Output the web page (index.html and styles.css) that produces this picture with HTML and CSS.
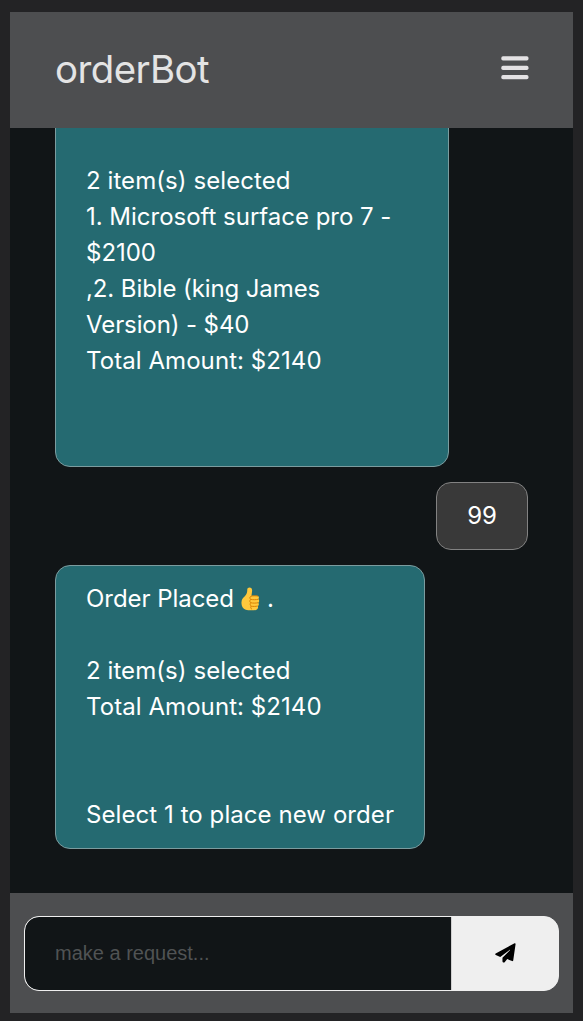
FILE: index.html
```html
<!DOCTYPE html>
<html lang="en">
<head>
<meta charset="utf-8">
<title>orderBot</title>
<link rel="stylesheet" href="styles.css">
</head>
<body>
<div class="app">
  <header class="header">
    <h1 class="brand">orderBot</h1>
    <svg class="menu" viewBox="0 0 28 24" aria-label="Menu"><rect x=".3" y=".2" width="27.2" height="4.2" rx="1.7"/><rect x=".3" y="9.7" width="27.2" height="4.2" rx="1.7"/><rect x=".3" y="19.1" width="27.2" height="4.2" rx="1.7"/></svg>
  </header>
  <main class="chat">
    <div class="bubble bot wide">
      <p class="line gap-above">2 item(s) selected</p>
      <p class="line normal">1. Microsoft surface pro 7 - $2100</p>
      <p class="line tight">,2. Bible (king James Version) - $40</p>
      <p class="line gap-below">Total Amount: $2140</p>
    </div>
    <div class="bubble user">99</div>
    <div class="bubble bot">
      <p class="line placed"><span>Order Placed</span><svg class="thumb" viewBox="0 0 20 25" aria-label="Thumbs up"><path d="M7.3.9c1.6-1.2 4.2-.5 4.4 2 .1 2.2-.4 3.9-.7 6.2h5.8c2.2 0 2.7 2.7 1.3 3.5 1.5.9 1.3 3.2 0 3.8 1.1 1 .9 3-.4 3.6.8 1.3.1 3.5-1.9 4-3.3.7-8.3.6-10.8-.3C1.9 22.5.3 19.5.5 16c.2-3.2 1.500-4.600 3.500-6.400 2.100-2 2.500-3.800 2.600-6.500 0-1 .1-1.700.7-2.200Z" fill="#ffc83d"/><path d="M18 9.500c-2.500-.5-5.800-.5-7.600.2-1.500.7-1.500 2.600-.1 3.200-1.500.8-1.300 3 .1 3.600-1.200.8-.9 2.900.4 3.400-1 .9-.6 2.700.7 3.300M10.500 12.900c2 .5 5.400.4 7.600-.1M10.500 16.500c2 .5 5.200.4 7.600-.1M10.800 20c2 .5 4.600.4 6.800-.1" fill="none" stroke="#d67d00" stroke-width="1"/></svg><span>.</span></p>
      <p class="line gap-above">2 item(s) selected</p>
      <p class="line gap-below">Total Amount: $2140</p>
      <p class="line">Select 1 to place new order</p>
    </div>
  </main>
  <footer class="footer">
    <form class="composer">
      <input class="field" type="text" placeholder="make a request...">
      <button class="send" type="button" aria-label="Send"><svg class="plane" viewBox="0 0 22 21"><path d="M20.5.3c.6-.3 1.200.1 1.100.8l-2.500 17.200c-.1.600-.7.900-1.200.7l-5.100-2.100-2.500 3.100c-.8 1-2.500.5-2.500-.9v-3.500L15.700 7.600c.2-.3-.1-.6-.4-.3L5.500 14.600.8 12.600c-.7-.3-.8-1.200-.1-1.600Z"/></svg></button>
    </form>
  </footer>
</div>
</body>
</html>
```
FILE: styles.css
```css
* {
  box-sizing: border-box;
}

body {
  margin: 0;
  height: 1021px;
  padding: 12px 10px 8px;
  overflow: hidden;
  background: #232325;
  font-family: Inter, sans-serif;
}

.app {
  display: flex;
  flex-direction: column;
  height: 1001px;
  background: #111517;
}

.header {
  display: flex;
  flex: 0 0 116px;
  align-items: center;
  justify-content: space-between;
  padding: 0 44px 0 45px;
  background: #4d4e50;
}

.brand {
  margin: 0 0 2px;
  color: #e4e4e4;
  font: 400 38.4px/48px Inter, sans-serif;
  letter-spacing: -0.55px;
}

.menu {
  width: 28px;
  height: 24px;
  margin-bottom: 4px;
  fill: #e4e2e4;
}

.chat {
  display: flex;
  flex: 1;
  min-height: 0;
  flex-direction: column;
  align-items: flex-start;
  justify-content: flex-end;
  gap: 15px;
  overflow: hidden;
  padding: 0 45px 44px;
}

.bubble {
  flex: none;
  padding: 15px 30px;
  border: 1px solid #7c9c9f;
  border-radius: 15px;
  background: #256a71;
  color: #fff;
  font-size: 24px;
  line-height: 36px;
}

.bot {
  letter-spacing: 0.07px;
}

.wide {
  width: 394px;
}

.line {
  margin: 0;
}

.normal {
  letter-spacing: -0.02px;
}

.tight {
  letter-spacing: -0.1px;
}

.gap-above {
  padding-top: 36px;
}

.gap-below {
  padding-bottom: 72px;
}

.user {
  align-self: flex-end;
  border-color: #828282;
  background: #393939;
}

.placed {
  display: flex;
  align-items: center;
  letter-spacing: -0.05px;
}

.thumb {
  width: 19px;
  height: 24px;
  margin: 0 7px 0 7px;
}

.footer {
  flex: 0 0 120px;
  padding: 23px 14px 22px;
  background: #4d4e50;
}

.composer {
  display: flex;
  height: 75px;
  overflow: hidden;
  border: 1px solid #efefef;
  border-radius: 15px;
  background: #efefef;
}

.field {
  flex: 1;
  min-width: 0;
  padding: 0 30px;
  border: 0;
  border-radius: 14px 0 0 14px;
  outline: 0;
  background: #111517;
  color: #fff;
  font: 20px "Liberation Sans", Arial, sans-serif;
}

.field::placeholder {
  color: #505354;
}

.send {
  display: flex;
  width: 107px;
  align-items: center;
  justify-content: center;
  padding: 0 0 2px;
  border: 0;
  border-left: 1px solid #d0d0d0;
  background: #efefef;
}

.plane {
  width: 21px;
  height: 20px;
}
```
